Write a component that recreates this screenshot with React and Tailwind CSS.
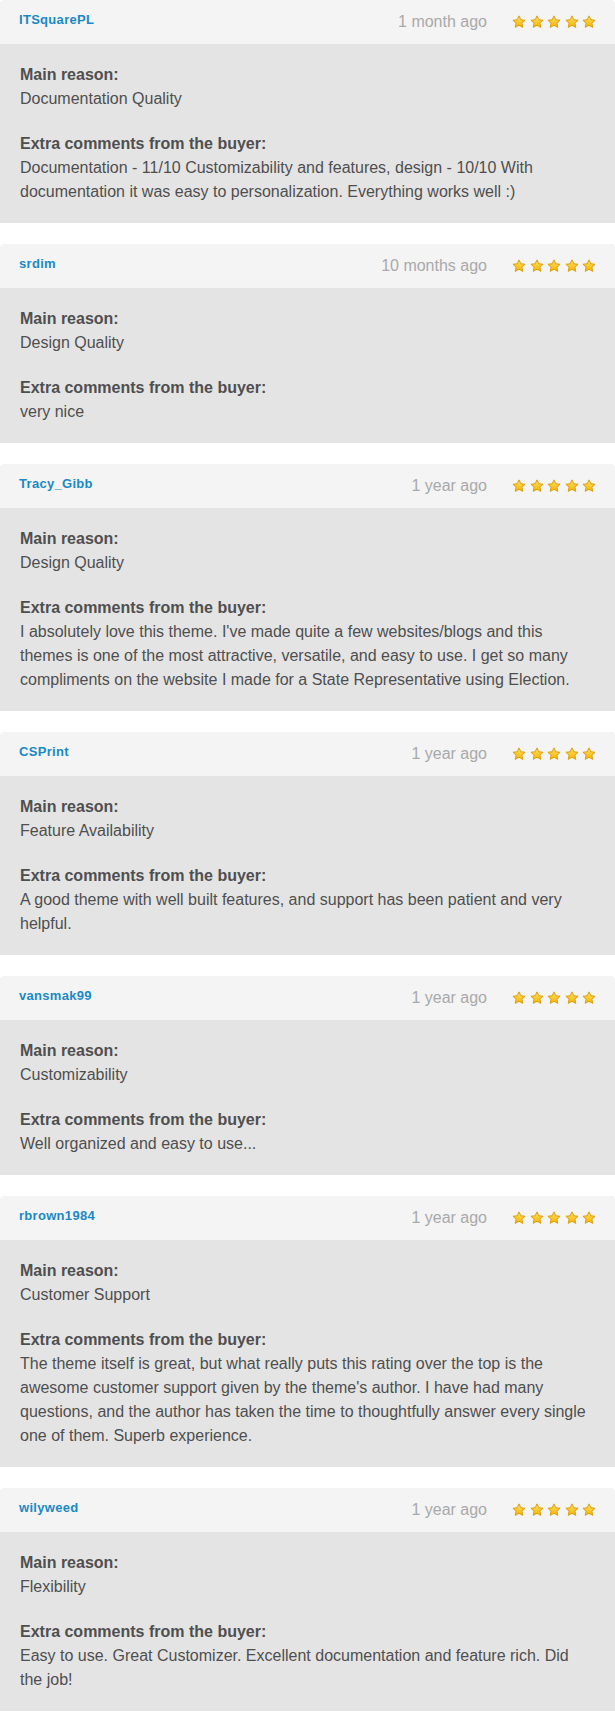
const reviews = [
    {
        user: 'ITSquarePL',
        time: '1 month ago',
        reason: 'Documentation Quality',
        comment: 'Documentation - 11/10 Customizability and features, design - 10/10 With documentation it was easy to personalization. Everything works well :)',
    },
    { user: 'srdim', time: '10 months ago', reason: 'Design Quality', comment: 'very nice' },
    {
        user: 'Tracy_Gibb',
        time: '1 year ago',
        reason: 'Design Quality',
        comment: "I absolutely love this theme. I've made quite a few websites/blogs and this themes is one of the most attractive, versatile, and easy to use. I get so many compliments on the website I made for a State Representative using Election.",
    },
    {
        user: 'CSPrint',
        time: '1 year ago',
        reason: 'Feature Availability',
        comment: 'A good theme with well built features, and support has been patient and very helpful.',
    },
    { user: 'vansmak99', time: '1 year ago', reason: 'Customizability', comment: 'Well organized and easy to use...' },
    {
        user: 'rbrown1984',
        time: '1 year ago',
        reason: 'Customer Support',
        comment: "The theme itself is great, but what really puts this rating over the top is the awesome customer support given by the theme's author. I have had many questions, and the author has taken the time to thoughtfully answer every single one of them. Superb experience.",
    },
    {
        user: 'wilyweed',
        time: '1 year ago',
        reason: 'Flexibility',
        comment: 'Easy to use. Great Customizer. Excellent documentation and feature rich. Did the job!',
    },
]

const Star = () => (
    <svg width="14" height="14" viewBox="0 0 24 24">
        <defs>
            <linearGradient id="starFill" x1="0" y1="0" x2="0" y2="1">
                <stop offset="0" stopColor="#ffe066" />
                <stop offset="1" stopColor="#f5b400" />
            </linearGradient>
        </defs>
        <path
            d="M12 1.5l3.1 6.7 7.3.8-5.4 5 1.5 7.2L12 17.6l-6.5 3.6 1.5-7.2-5.4-5 7.3-.8z"
            fill="url(#starFill)"
            stroke="#d99a00"
            strokeWidth="1.6"
            strokeLinejoin="round"
        />
    </svg>
)

const Review = ({ review }) => (
    <div className="mb-[21px]">
        <div className="h-[44px] pl-[19px] pr-[19px] flex items-center justify-between bg-[#f4f4f4] rounded-t-[4px]">
            <a href="#" className="text-[13px] font-bold tracking-[0.3px] text-[#1a89c4] mb-[4px]">
                {review.user}
            </a>
            <div className="flex items-center gap-[25px]">
                <span className="text-[16px] text-[#a9a9a9]">{review.time}</span>
                <div className="flex items-center gap-[3.5px]">
                    <Star />
                    <Star />
                    <Star />
                    <Star />
                    <Star />
                </div>
            </div>
        </div>
        <div className="bg-[#e4e4e4] pl-[20px] pr-[24px] py-[19px] text-[16px] leading-[24px] text-[#4f4f4f]">
            {/* label + value pairs */}
            <div className="font-bold">Main reason:</div>
            <div>{review.reason}</div>
            <div className="font-bold mt-[21px]">Extra comments from the buyer:</div>
            <div>{review.comment}</div>
        </div>
    </div>
)

export default function App() {
    return (
        <div className="w-[615px] bg-white font-['Liberation_Sans',Arial,sans-serif]">
            {reviews.map((review) => (
                <Review key={review.user} review={review} />
            ))}
        </div>
    )
}
